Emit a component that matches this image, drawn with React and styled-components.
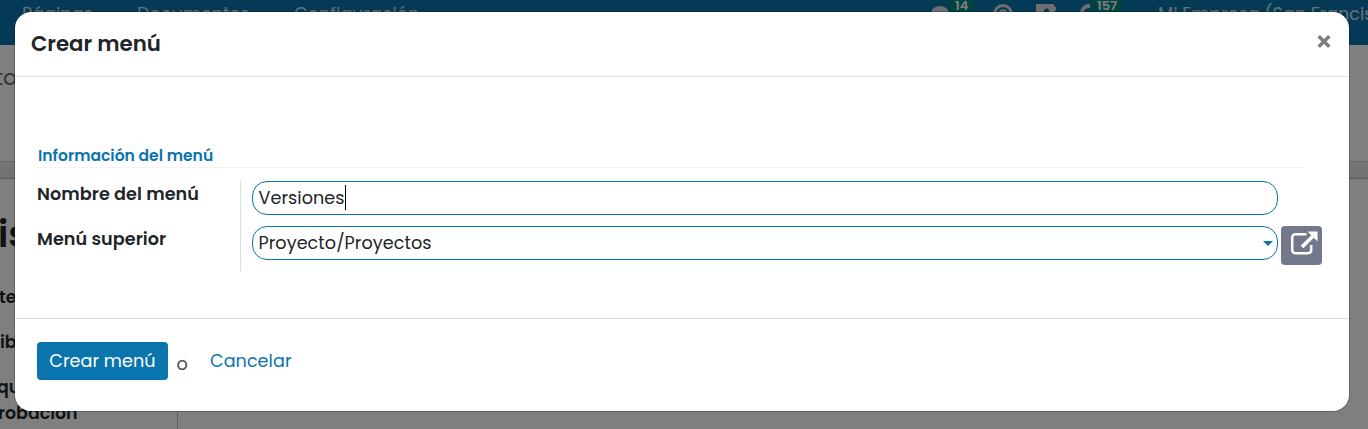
import React from "react";
import styled, { createGlobalStyle } from "styled-components";

const GlobalStyle = createGlobalStyle`
  * { box-sizing: border-box; }
  html, body { margin: 0; height: 100%; overflow: hidden; }
  body {
    font-family: Poppins, Inter, "Open Sans", sans-serif;
    font-size: 17.6px;
    line-height: 26px;
    color: #212529;
    background: #fff;
  }
`;

const Screen = styled.div`
  position: relative;
  height: 429px;
  overflow: hidden;
`;

/* page behind the dialog */
const Navbar = styled.nav`
  display: flex;
  height: 45px;
  padding: 0 0 0 22px;
  background: #0a74ac;
  color: #fff;
`;
const NavItem = styled.span`
  width: ${(p) => p.$w}px;
  flex: none;
  padding-top: 1px;
  font-size: 17.6px;
  white-space: nowrap;
  opacity: 0.8;
`;
const Tray = styled.div`
  display: flex;
  flex: none;
  width: 227px;
  margin-left: auto;
`;
const TrayItem = styled.span`
  display: flex;
  flex: none;
  width: ${(p) => p.$w}px;
  svg { flex: none; margin-top: 4px; fill: #ddd; }
`;
const Badge = styled.span`
  height: 18px;
  margin: -4px 0 0 ${(p) => p.$shift}px;
  padding: 0 7px;
  border-radius: 9px;
  background: #068484;
  font-size: 13px;
  font-weight: 600;
  line-height: 20px;
  color: #fff;
`;
const Crumbs = styled.div`
  height: 117px;
  padding-top: 20px;
  border-bottom: 1px solid #d8d8d8;
  font-size: 22px;
  color: #666d73;
  overflow: hidden;
  span { margin-left: -5px; }
`;
const StatusStrip = styled.div`
  height: 17px;
  background: linear-gradient(#eceded, #dfe2e2);
  border-bottom: 1px solid #bbb;
`;
const Sheet = styled.div`
  width: 178px;
  height: 251px;
  border-right: 1px solid #bcbec0;
  font-weight: 600;
  white-space: nowrap;
`;
const SheetTitle = styled.div`
  height: 105px;
  margin-left: -2px;
  padding-top: 27px;
  font-size: 37px;
  line-height: 56px;
`;
const SheetLabel = styled.div`
  height: ${(p) => p.$h}px;
  margin-left: ${(p) => p.$x || 0}px;
  font-size: 17.4px;
`;

const Backdrop = styled.div`
  position: absolute;
  inset: 0;
  padding: 12px 19px 18px 15px;
  background: rgba(0, 0, 0, 0.5);
`;
const Dialog = styled.section`
  display: flex;
  flex-direction: column;
  height: 399px;
  border-radius: 16px;
  background: #fff;
  box-shadow: 0 0 0 1px rgba(0, 0, 0, 0.2);
`;
const DialogHeader = styled.header`
  display: flex;
  justify-content: space-between;
  height: 65px;
  padding: 18px 18px 0 16px;
  border-bottom: 1px solid #dee2e6;
`;
const Title = styled.h4`
  margin: 0;
  font-size: 21.3px;
  line-height: 28px;
  font-weight: 600;
`;
const CloseButton = styled.button`
  display: flex;
  width: 14px;
  height: 14px;
  margin-top: 5px;
  padding: 0;
  border: 0;
  background: none;
`;
const DialogBody = styled.div`
  height: 241px;
  padding: 66px 27px 0 22px;
`;
const SectionTitle = styled.div`
  width: 1266px;
  height: 25px;
  margin-left: 1px;
  border-bottom: 1px solid #f3f3f4;
  font-size: 15.55px;
  font-weight: 600;
  line-height: 25px;
  color: #0a74ac;
`;
const Fields = styled.div`
  display: flex;
  margin-top: 13px;
`;
const Labels = styled.div`
  width: 204px;
  height: 90px;
  border-right: 1px solid #dcdde0;
`;
const Label = styled.label`
  display: block;
  height: 45px;
  font-weight: 600;
  letter-spacing: 0.06px;
`;
const Controls = styled.div`
  display: flex;
  flex-direction: column;
  gap: 11px;
  margin-left: 11px;
`;
const ControlRow = styled.div`
  display: flex;
  height: 34px;
  gap: 3px;
`;
const Field = styled.div`
  display: flex;
  align-items: center;
  width: 1026px;
  height: 34px;
  padding: 0 4px 0 5.5px;
  border: 1px solid #0a74ac;
  border-radius: 15px;
  letter-spacing: 0.06px;
`;
const Caret = styled.span`
  width: 1px;
  height: 25px;
  margin-top: -1px;
  background: #000;
`;
const Arrow = styled.svg`
  margin-left: auto;
  fill: #0a74ac;
`;
const ExternalButton = styled.button`
  display: flex;
  width: 41px;
  height: 39px;
  padding: 5px 0 0 9px;
  border: 0;
  border-radius: 4px;
  background: #74788d;
`;
const DialogFooter = styled.footer`
  display: flex;
  flex: 1;
  padding: 23px 22px 0;
  border-top: 1px solid #dcdde6;
`;
const PrimaryButton = styled.button`
  width: 131px;
  height: 38px;
  padding: 0;
  border: 0;
  border-radius: 4px;
  background: #0a74ac;
  color: #fff;
  font: inherit;
  letter-spacing: 0.05px;
`;
const Or = styled.span`
  width: 33.5px;
  margin: 9px 0 0 8.5px;
  color: #495057;
`;
const LinkButton = styled.button`
  height: 38px;
  padding: 0;
  border: 0;
  background: none;
  color: #0a74ac;
  font: inherit;
  letter-spacing: 0.05px;
`;

export default function App() {
  return (
    <Screen>
      <GlobalStyle />
      <Navbar>
        <NavItem $w={115}>Páginas</NavItem>
        <NavItem $w={157}>Documentos</NavItem>
        <NavItem $w={150}>Configuración</NavItem>
        <Tray>
          <TrayItem $w={62}>
            <svg width="18" height="18" viewBox="0 0 18 18"><ellipse cx="9" cy="8" rx="8.5" ry="6" /></svg>
            <Badge $shift={-1}>14</Badge>
          </TrayItem>
          <TrayItem $w={43}>
            <svg width="20" height="20" viewBox="0 0 20 20">
              <path fillRule="evenodd" d="M10 0a10 10 0 1 0 0 20 10 10 0 0 0 0-20Zm0 3a7 7 0 1 1 0 14 7 7 0 0 1 0-14Z" />
              <path d="M6 8c1-4 8-3 8 0 0 2-3 2-3 4H9c0-3 2-3 2-4 0-1-2-1-2 1Z" />
            </svg>
          </TrayItem>
          <TrayItem $w={44}>
            <svg width="20" height="18" viewBox="0 0 20 18"><path d="M0-1h18v3l2 1v3l-2 2h-5V6l-2-2-3 2v8H0Z" /></svg>
          </TrayItem>
          <TrayItem $w={78}>
            <svg width="18" height="18" viewBox="0 0 18 18"><path d="M10 0a9 9 0 1 0 8 9h-3a6 6 0 1 1-5-5Z" /></svg>
            <Badge $shift={-8}>157</Badge>
          </TrayItem>
        </Tray>
        <NavItem $w={210}>Mi Empresa (San Francisco)</NavItem>
      </Navbar>
      <Crumbs><span>to</span></Crumbs>
      <StatusStrip />
      <Sheet>
        <SheetTitle>is</SheetTitle>
        <SheetLabel $h={45} $x={-1}>te</SheetLabel>
        <SheetLabel $h={45}>ibl</SheetLabel>
        <SheetLabel $h={26} $x={-3}>que</SheetLabel>
        <SheetLabel $h={26} $x={-2}>robación</SheetLabel>
      </Sheet>

      <Backdrop>
        <Dialog>
          <DialogHeader>
            <Title>Crear menú</Title>
            <CloseButton aria-label="Cerrar">
              <svg width="14" height="14" viewBox="0 0 14 14" stroke="#7f7f7f" strokeWidth="3.5">
                <path d="M1.7 1.2 12.3 11.8M12.3 1.2 1.7 11.8" />
              </svg>
            </CloseButton>
          </DialogHeader>
          <DialogBody>
            <SectionTitle>Información del menú</SectionTitle>
            <Fields>
              <Labels>
                <Label>Nombre del menú</Label>
                <Label>Menú superior</Label>
              </Labels>
              <Controls>
                <ControlRow>
                  <Field>Versiones<Caret /></Field>
                </ControlRow>
                <ControlRow>
                  <Field>
                    Proyecto/Proyectos
                    <Arrow width="10" height="5" viewBox="0 0 10 5"><path d="M0 0h10L5 5Z" /></Arrow>
                  </Field>
                  <ExternalButton aria-label="Abrir">
                    <svg width="28" height="25" viewBox="0 0 28 25" fill="none" stroke="#fff">
                      <path strokeWidth="2.5" d="M16.5 3.2H5.5A3.3 3.3 0 0 0 2.2 6.500v12.500A3.300 3.300 0 0 0 5.500 22.200H18A3.300 3.300 0 0 0 21.200 19V14" />
                      <path strokeWidth="3.600" d="m12 16 11-11" />
                      <path fill="#fff" stroke="none" d="M17.500 0.500H27.500v10Z" />
                    </svg>
                  </ExternalButton>
                </ControlRow>
              </Controls>
            </Fields>
          </DialogBody>
          <DialogFooter>
            <PrimaryButton>Crear menú</PrimaryButton>
            <Or>o</Or>
            <LinkButton>Cancelar</LinkButton>
          </DialogFooter>
        </Dialog>
      </Backdrop>
    </Screen>
  );
}
